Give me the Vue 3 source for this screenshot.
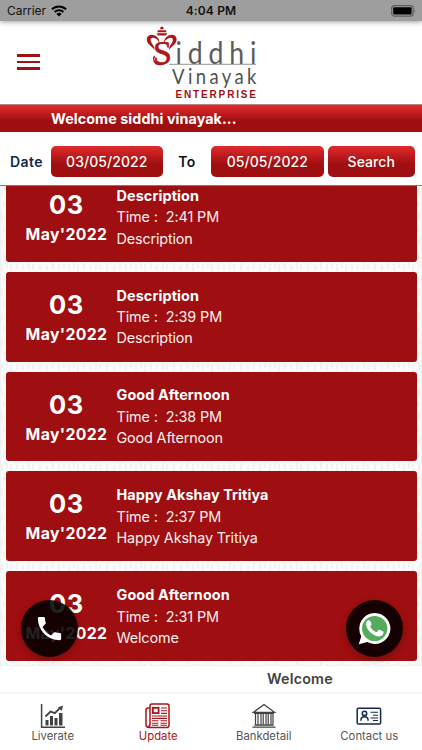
<template>
  <div class="app">
    <div class="status-bar">
      <div class="carrier">
        <span>Carrier</span>
        <svg class="wifi" viewBox="0 0 16 12">
          <path d="M1 4.3a10 10 0 0 1 14 0" />
          <path d="M3.6 7a6.3 6.3 0 0 1 8.8 0" />
          <path class="dot" d="M5.4 9a3.8 3.8 0 0 1 5.2 0L8 11.6z" />
        </svg>
      </div>
      <span class="clock">4:04 PM</span>
      <div class="battery-side">
        <svg class="battery" viewBox="0 0 26 12">
          <rect class="shell" x="0.7" y="0.7" width="21.4" height="10.4" rx="2.6" />
          <rect x="2.2" y="2.2" width="18.4" height="7.4" rx="1" />
          <path class="tip" d="M23.5 4q1.5 2 0 4z" />
        </svg>
      </div>
    </div>

    <header class="header">
      <button class="menu-btn" aria-label="Menu">
        <span></span>
        <span></span>
        <span></span>
      </button>
      <svg class="logo" viewBox="0 0 125 83">
        <g class="crown">
          <path d="M20.8 6.8h2.2l.8 2.5h-3.8z" />
          <path d="M18 10.2h7.800l.7 2h-9.200z" />
          <path d="M16.500 13.300h10.800l-1.500 2.300h-7.800z" />
          <path d="M19.500 23C19.500 17.500 15 14.500 11 14.800C6.500 15.300 5.500 20.500 8.800 24.300C10.500 26.200 13 27.500 14.500 30C14.800 27 13 25.200 11.500 22.800C10 20.200 10.300 17.800 13 17.800C15.800 17.800 18 20 19.500 23z" />
          <path d="M24 23C24 17.500 28.500 14.500 32.500 14.800C37 15.300 38 20.500 34.700 24.300C33 26.200 30.500 27.500 29 30C28.700 27 30.500 25.200 32 22.800C33.500 20.200 33.200 17.800 30.500 17.800C27.700 17.800 25.500 20 24 23z" />
        </g>
        <text class="logo-s" x="13" y="43.5" textLength="17">S</text>
        <path class="curl" d="M14.500 36C12.500 39 14 44.300 20 44.500C25.500 44.500 28.500 41 28 36.500" />
        <text class="logo-name" transform="translate(35.5 44) scale(.86 1)" textLength="94">iddhi</text>
        <path class="logo-line" d="M29 44.300H116" />
        <text class="logo-sub" transform="translate(32 63.5) scale(.88 1)" textLength="96">Vinayak</text>
        <text class="logo-ent" x="35.5" y="77.8" textLength="80.5">ENTERPRISE</text>
      </svg>
    </header>

    <div class="welcome-bar">Welcome siddhi vinayak...</div>

    <div class="filter">
      <span class="label date-label">Date</span>
      <button class="btn date-btn">{{ fromDate }}</button>
      <span class="label to-label">To</span>
      <button class="btn date-btn">{{ toDate }}</button>
      <button class="btn search-btn">Search</button>
    </div>

    <main class="list">
      <svg class="pattern" aria-hidden="true">
        <defs>
          <pattern id="marks" width="67" height="25" patternUnits="userSpaceOnUse">
            <path d="M2 3v7M7 1v6M11 3v8M17 2v7M23 4v5M29 1v8M33 3v6M40 2v8M47 4v6M53 1v7M59 3v7M64 2v5M4 15v6M10 14v8M16 16v5M24 13v7M31 15v7M37 14v5M44 15v8M51 13v6M57 15v7M63 14v7" />
          </pattern>
        </defs>
        <rect width="100%" height="100%" fill="url(#marks)" />
      </svg>
      <article v-for="(item, index) in updates" :key="index" class="card">
        <div class="card-date">
          <span class="day">03</span>
          <span class="month">May'2022</span>
        </div>
        <div class="card-body">
          <h3>{{ item.title }}</h3>
          <p class="time">Time :&nbsp; {{ item.time }}</p>
          <p>{{ item.text }}</p>
        </div>
      </article>
    </main>

    <div class="marquee">Welcome</div>

    <nav class="tabs">
      <button class="tab">
        <svg viewBox="0 0 26 26" class="tab-icon chart">
          <path class="axis" d="M1.6 1v23.3H25" />
          <path class="bars" d="M5.5 17h3v5.5h-3zM10 13h3v9.5h-3zM14.5 15h3v7.5h-3zM19 10h3.5v12.5H19z" />
          <path class="trend" d="M5.5 13.5l5-5 4.3 1.7 6-6" />
          <path class="bars" d="M18 4.5l5-2-1.2 5.5z" />
        </svg>
        <span>Liverate</span>
      </button>
      <button class="tab active">
        <svg viewBox="0 0 26 26" class="tab-icon news">
          <path d="M5 4.5V2.8Q5 1 6.8 1H22q2 0 2 2v19q0 2.6-2.6 2.6H4Q1 24.6 1 21.6V7q0-2 2-2h2v16.3q0 2.2-2 2.2" />
          <rect class="thick" x="7.8" y="4.8" width="5.8" height="5.3" />
          <path class="fine" d="M16 5h6M16 7.7h6M16 10.4h6M7 13h15M7 15.4h15M7 17.8h6.4M15.5 17.8H22M7 20.2h6.4M15.5 20.2H22M7 22.2h6.4M15.5 22.2H22" />
        </svg>
        <span>Update</span>
      </button>
      <button class="tab">
        <svg viewBox="0 0 26 26" class="tab-icon bank">
          <path d="M2.5 9.3L13 1.5l10.5 7.8zM3 10.3h20M3.5 22h19M1.5 24.2h23" />
          <path class="pillars" d="M4.5 11v10.5M7 11v10.5M10 11v10.5M12.2 11v10.5M15 11v10.5M17.2 11v10.5M20 11v10.5M22 11v10.5" />
        </svg>
        <span>Bankdetail</span>
      </button>
      <button class="tab">
        <svg viewBox="0 0 26 26" class="tab-icon contact">
          <rect x="1.2" y="5.2" width="23.4" height="15.8" rx="1.3" />
          <circle cx="8.5" cy="10.4" r="2.2" />
          <path d="M5 17.8v-1q0-3 3.500-3t3.500 3v1" />
          <path class="fine" d="M14.5 9.3H22M17 12.2h5M14.5 15H22M17 17.5h5" />
        </svg>
        <span>Contact us</span>
      </button>
    </nav>

    <button class="fab call" aria-label="Call">
      <svg viewBox="0 0 24 24">
        <path d="M6.62 10.79c1.44 2.83 3.76 5.14 6.59 6.59l2.2-2.2c.27-.27.67-.36 1.02-.24 1.12.37 2.33.57 3.57.57.55 0 1 .45 1 1V20c0 .55-.45 1-1 1C10.61 21 3 13.39 3 4c0-.55.45-1 1-1h3.5c.55 0 1 .45 1 1 0 1.25.2 2.45.57 3.57.11.35.03.74-.25 1.02z" />
      </svg>
    </button>
    <button class="fab whatsapp" aria-label="WhatsApp">
      <svg viewBox="0 0 34 34">
        <path fill="#fff" d="M17.2 1A16 16 0 1 1 9.6 31L.8 33.2 3.4 25A16 16 0 0 1 17.2 1z" />
        <circle cx="17.2" cy="17" r="13" fill="#55ab5b" />
        <path fill="#fff" d="M12.5 9.3c-.5-1-1-.9-1.6-.9-1 0-2.6 1.5-2.6 4 0 6 7.7 12.8 13.3 12.8 2.8 0 4.6-1.6 4.7-4 .1-.8-.2-1-.7-1.3l-3.3-1.6c-.5-.2-.9-.2-1.2.2l-1.5 1.9c-.3.4-.7.4-1.2.1-2.7-1.2-4.4-2.9-5.7-5.2-.3-.5 0-.8.3-1.1.6-.6 1.3-1.3.9-2.1z" />
      </svg>
    </button>
  </div>
</template>

<script setup>
import { ref } from 'vue';

const fromDate = ref('03/05/2022');
const toDate = ref('05/05/2022');

const updates = ref([
  { title: 'Description', time: '2:41 PM', text: 'Description' },
  { title: 'Description', time: '2:39 PM', text: 'Description' },
  { title: 'Good Afternoon', time: '2:38 PM', text: 'Good Afternoon' },
  { title: 'Happy Akshay Tritiya', time: '2:37 PM', text: 'Happy Akshay Tritiya' },
  { title: 'Good Afternoon', time: '2:31 PM', text: 'Welcome' },
]);
</script>

<style>
body {
  background: #fff;
}
</style>

<style scoped>
.app {
  position: relative;
  width: 100%;
  height: 750px;
  display: flex;
  flex-direction: column;
  overflow: hidden;
  background: #fff;
  font-family: Inter, "Liberation Sans", sans-serif;
}

button {
  border: none;
  padding: 0;
  background: none;
  font-family: inherit;
}

/* Status bar */
.status-bar {
  flex: 0 0 21px;
  display: grid;
  grid-template-columns: 1fr auto 1fr;
  align-items: center;
  background: #9e9e9e;
  color: #111;
  box-shadow: 0 1px 5px rgba(0, 0, 0, 0.4);
  z-index: 1;
}
.carrier { display: flex; align-items: center; gap: 5px; padding-left: 7px; }
.carrier span { font-size: 12px; letter-spacing: -0.05px; }
.wifi { width: 16px; height: 12px; fill: none; stroke: #000; stroke-width: 2.1; }
.wifi .dot { fill: #000; stroke: none; }
.clock { font-weight: 600; font-size: 12px; letter-spacing: 0.15px; }
.battery-side { display: flex; justify-content: flex-end; padding-right: 5px; }
.battery { width: 26px; height: 12px; }
.battery .shell { fill: none; stroke: #5d5d5d; stroke-width: 1.2; }
.battery .tip { fill: #5d5d5d; }

/* Header with the logo */
.header {
  flex: 0 0 83px;
  display: flex;
  align-items: flex-start;
}
.menu-btn {
  display: flex;
  flex-direction: column;
  gap: 4px;
  margin: 33px 0 0 17px;
}
.menu-btn span { width: 23px; height: 2.5px; background: #9f1114; }
.logo { width: 125px; height: 83px; margin: -1px 0 0 100px; }
.crown { fill: #ad1519; }
.logo-s { font: 34px "Liberation Serif", serif; fill: #ad1519; stroke: #ad1519; stroke-width: 0.6; }
.curl { fill: none; stroke: #ad1519; stroke-width: 1.6; }
.logo-name { font: 400 31px Lato, sans-serif; fill: #5c5c5c; }
.logo-line { stroke: #777; stroke-width: 0.8; }
.logo-sub { font: 400 21px Lato, sans-serif; fill: #505050; }
.logo-ent { font: bold 10px "Liberation Sans", sans-serif; fill: #9f1114; }

.welcome-bar {
  flex: 0 0 28px;
  box-sizing: border-box;
  padding-left: 51px;
  line-height: 27px;
  background: linear-gradient(#e22b2e, #9f0e10 60%);
  border-top: 1px solid #b78080;
  color: #fff;
  font-size: 14.3px;
  font-weight: 700;
  letter-spacing: 0.08px;
}

/* Date filter */
.filter {
  flex: 0 0 54px;
  box-sizing: border-box;
  display: flex;
  align-items: center;
  padding: 6px 0 0 10px;
  border-bottom: 1px solid #71818c;
}
.label { font-size: 14px; font-weight: 600; letter-spacing: 0.45px; }
.date-label { width: 40.5px; color: #14294d; }
.to-label { width: 48px; text-align: center; color: #111; }
.btn {
  height: 31px;
  border-radius: 5px;
  background: linear-gradient(#e02a2d, #9f0e10 60%);
  color: #fff;
  font-size: 14px;
  font-weight: 500;
  letter-spacing: 0.05px;
}
.date-btn { width: 112.5px; }
.search-btn { width: 86.5px; margin-left: 4.5px; }

/* Updates list, scrolled so that the first card is cut by the filter */
.list {
  position: relative;
  flex: 0 0 480px;
  display: flex;
  flex-direction: column;
  justify-content: flex-end;
  gap: 10px;
  box-sizing: border-box;
  padding: 0 5.5px 5px;
  overflow: hidden;
  background: #fbfbfb;
}
.pattern { position: absolute; inset: 0; width: 100%; height: 100%; stroke: #f1f1f1; stroke-width: 1.8; }
.card {
  position: relative;
  flex: 0 0 89.8px;
  display: flex;
  background: #9f0e10;
  border-radius: 3px;
  color: #fff;
}
.card-date {
  width: 111px;
  display: flex;
  flex-direction: column;
  align-items: center;
  box-sizing: border-box;
  padding: 18px 0 0 11px;
}
.day { font-size: 25.5px; line-height: 30px; font-weight: 700; letter-spacing: 0.6px; }
.month { margin-top: 5px; font-size: 15.8px; line-height: 20px; font-weight: 700; letter-spacing: 0.35px; }
.card-body { padding-top: 12.8px; }
.card-body h3 { margin: 0; font-size: 14.4px; line-height: 21.5px; font-weight: 700; letter-spacing: 0.1px; }
.card-body p { margin: 0; font-size: 14.4px; line-height: 21.3px; letter-spacing: -0.15px; color: #fbeeee; }
.card-body .time { letter-spacing: -0.1px; }

.marquee {
  flex: 0 0 26px;
  padding-left: 267px;
  line-height: 25px;
  color: #424242;
  font-size: 14.3px;
  font-weight: 600;
  letter-spacing: 0.2px;
}

/* Bottom tabs */
.tabs {
  flex: 0 0 58px;
  box-sizing: border-box;
  display: grid;
  grid-template-columns: repeat(4, 1fr);
  border-top: 2px solid #f6f6f6;
}
.tab {
  display: flex;
  flex-direction: column;
  align-items: center;
  padding-top: 9px;
  color: #555;
  font-size: 11.3px;
  line-height: 16px;
}
.tab.active { color: #a91519; }
.tab-icon { width: 26px; height: 26px; fill: none; stroke: currentColor; stroke-width: 1.5; }
.tab span { margin-top: -1px; }
.chart { color: #424242; }
.bars { fill: currentColor; stroke: none; }
.trend { stroke-width: 1.8; }
.news .thick { stroke-width: 1.8; }
.fine { stroke-width: 1.1; }
.bank { color: #424242; stroke-width: 1.3; }
.pillars { stroke-width: 1.2; }
.contact { color: #14294d; }

/* Floating buttons */
.fab {
  position: absolute;
  bottom: 93.5px;
  width: 57px;
  height: 57px;
  display: flex;
  align-items: center;
  justify-content: center;
  border-radius: 50%;
  background: rgba(0, 0, 0, 0.87);
  box-shadow: 0 3px 7px rgba(0, 0, 0, 0.22);
}
.call { left: 20.5px; }
.call svg { width: 31px; height: 31px; fill: #fff; }
.whatsapp { right: 19px; }
.whatsapp svg { width: 33px; height: 33px; margin-right: 1px; }
</style>
